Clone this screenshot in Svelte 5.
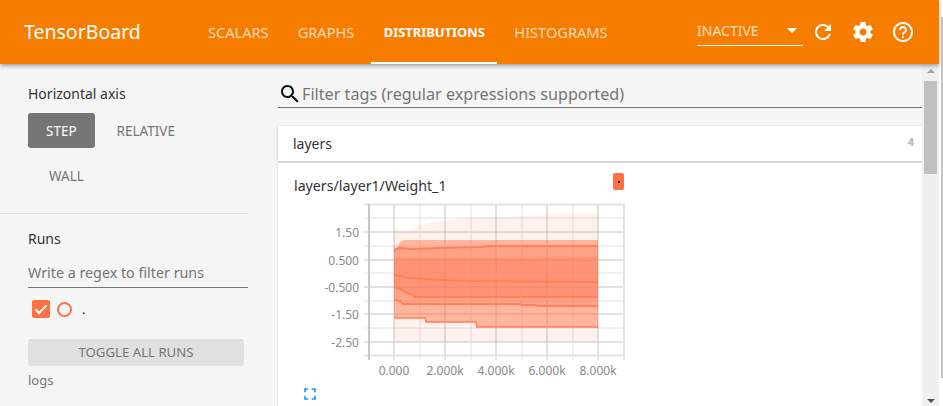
<script>
  // TensorBoard distributions dashboard, static snapshot.
  const tabs = ['Scalars', 'Graphs', 'Distributions', 'Histograms'];
  const activeTab = 'Distributions';
  const axisModes = ['Step', 'Relative', 'Wall'];

  const line = (pts) => pts.map((p) => p.join(',')).join(' ');
  const band = (top, bottom) => line([...top, ...[...bottom].reverse()]);

  const outerTop = [[394, 228], [402, 230], [410, 231], [420, 225], [440, 221], [470, 218], [520, 216], [598, 213]];
  const outerBottom = [[394, 342], [598, 342]];
  const t2 = [[394, 243], [395.5, 249], [400, 242], [404, 240], [598, 240]];
  const b2 = [[394, 318], [425, 318], [426, 322], [476, 322], [477, 327], [598, 327]];
  const t3 = [[394, 251], [396, 249], [400, 248], [410, 249], [440, 248], [480, 247], [490, 246], [598, 246]];
  const b3 = [[394, 300], [400, 301], [403, 304], [520, 304], [521, 305], [536, 305], [537, 306], [598, 306]];
  const t4 = [[394, 258], [598, 257]];
  const b4 = [[394, 287], [400, 289], [405, 292], [413, 295], [414, 297], [598, 297]];
  const median = [[394, 275], [400, 276], [410, 278], [440, 280], [470, 281], [598, 282]];

  const xMajor = [394, 445, 496, 547, 598];
  const xMinor = [420, 471, 522, 573];
  const yMajor = [232, 260, 287, 314, 342];
  const yMinor = [218, 246, 273, 301, 328];
  const yLabels = [[232, '1.50'], [260, '0.500'], [287, '-0.500'], [314, '-1.50'], [342, '-2.50']];
  const xLabels = [[394, '0.000'], [445, '2.000k'], [496, '4.000k'], [547, '6.000k'], [598, '8.000k']];
</script>

<div class="screen">
  <div class="page">
    <header class="topbar">
      <div class="brand">TensorBoard</div>
      <nav class="tabs">
        {#each tabs as tab}
          <div class="tab" class:active={tab === activeTab}>{tab}</div>
        {/each}
      </nav>
      <div class="actions">
        <div class="inactive">
          <span>INACTIVE</span>
          <i class="caret"></i>
        </div>
        <svg class="action" viewBox="0 0 24 24"><path d="M17.65 6.35C16.2 4.9 14.21 4 12 4c-4.42 0-7.99 3.58-7.99 8s3.57 8 7.99 8c3.73 0 6.84-2.55 7.73-6h-2.08c-.82 2.33-3.04 4-5.65 4-3.31 0-6-2.69-6-6s2.69-6 6-6c1.66 0 3.14.69 4.22 1.78L13 11h7V4l-2.35 2.35z" /></svg>
        <svg class="action" viewBox="0 0 24 24"><path d="M19.43 12.98c.04-.32.07-.64.07-.98s-.03-.66-.07-.98l2.11-1.65c.19-.15.24-.42.12-.64l-2-3.46c-.12-.22-.39-.3-.61-.22l-2.49 1c-.52-.4-1.08-.73-1.69-.98l-.38-2.65C14.46 2.18 14.25 2 14 2h-4c-.25 0-.46.18-.49.42l-.38 2.65c-.61.25-1.17.59-1.69.98l-2.49-1c-.23-.09-.49 0-.61.22l-2 3.46c-.13.22-.07.49.12.64l2.11 1.65c-.04.32-.07.65-.07.98s.03.66.07.98l-2.11 1.65c-.19.15-.24.42-.12.64l2 3.46c.12.22.39.3.61.22l2.49-1c.52.4 1.08.73 1.69.98l.38 2.65c.03.24.24.42.49.42h4c.25 0 .46-.18.49-.42l.38-2.65c.61-.25 1.17-.59 1.69-.98l2.49 1c.23.09.49 0 .61-.22l2-3.46c.12-.22.07-.49-.12-.64l-2.11-1.65zM12 15.5c-1.93 0-3.5-1.57-3.5-3.5s1.57-3.5 3.5-3.5 3.5 1.57 3.5 3.5-1.57 3.5-3.5 3.5z" /></svg>
        <svg class="action" viewBox="0 0 24 24"><path d="M11 18h2v-2h-2v2zm1-16C6.48 2 2 6.48 2 12s4.48 10 10 10 10-4.48 10-10S17.52 2 12 2zm0 18c-4.41 0-8-3.59-8-8s3.59-8 8-8 8 3.59 8 8-3.59 8-8 8zm0-14c-2.21 0-4 1.79-4 4h2c0-1.1.9-2 2-2s2 .9 2 2c0 2-3 1.75-3 5h2c0-2.25 3-2.5 3-5 0-2.21-1.79-4-4-4z" /></svg>
      </div>
    </header>

    <div class="body">
      <aside class="sidebar">
        <section class="axis">
          <h3>Horizontal axis</h3>
          <div class="modes">
            {#each axisModes as mode, i}
              <div class="mode" class:selected={i === 0}>{mode}</div>
            {/each}
          </div>
        </section>
        <section class="runs">
          <h3>Runs</h3>
          <div class="regex">Write a regex to filter runs</div>
          <div class="run">
            <span class="check">
              <svg viewBox="0 0 18 18"><path d="M3.5 9.5l3.6 3.5 7.4-7.6" /></svg>
            </span>
            <span class="radio"></span>
            <span class="run-name">.</span>
          </div>
          <div class="toggle">Toggle all runs</div>
          <div class="logdir">logs</div>
        </section>
      </aside>

      <main class="main">
        <div class="content">
          <div class="filter">
            <svg viewBox="0 0 24 24"><path d="M15.5 14h-.79l-.28-.27C15.41 12.59 16 11.11 16 9.5 16 5.91 13.09 3 9.5 3S3 5.91 3 9.5 5.91 16 9.5 16c1.61 0 3.09-.59 4.23-1.57l.27.28v.79l5 4.99L20.49 19l-4.99-5zm-6 0C7.01 14 5 11.99 5 9.5S7.01 5 9.5 5 14 7.01 14 9.5 11.99 14 9.5 14z" /></svg>
            <span>Filter tags (regular expressions supported)</span>
          </div>
          <div class="category">
            <span>layers</span>
            <span class="count">4</span>
          </div>
          <div class="card">
            <div class="tile">
              <div class="tile-head">
                <span>layers/layer1/Weight_1</span>
                <span class="chip"><i></i></span>
              </div>
              <svg class="chart" viewBox="325 195 315 190">
                {#each yMinor as y}<line class="minor" x1="364" x2="624" y1={y} y2={y} />{/each}
                {#each yMajor as y}<line class="major" x1="364" x2="624" y1={y} y2={y} />{/each}
                {#each xMinor as x}<line class="minor" x1={x} x2={x} y1="204" y2="360" />{/each}
                {#each xMajor as x}<line class="major" x1={x} x2={x} y1="204" y2="360" />{/each}
                <line class="frame" x1="364" x2="625" y1="204.5" y2="204.5" />
                <line class="frame" x1="364" x2="625" y1="355.5" y2="355.5" />
                <line class="frame" x1="624" x2="624" y1="204" y2="360" />
                <line class="y-axis" x1="369" x2="369" y1="204" y2="360" />

                <polygon class="band b1" points={band(outerTop, outerBottom)} />
                <polygon class="band b2" points={band(t2, b2)} />
                <polygon class="band b3" points={band(t3, b3)} />
                <polygon class="band b4" points={band(t4, b4)} />
                <polyline class="edge" points={line(t3)} />
                <polyline class="edge" points={line(median)} />
                <polyline class="edge" points={line(b4)} />
                <polyline class="edge" points={line(b3)} />
                <polyline class="edge thin" points={line(b2)} />

                {#each yLabels as [y, label]}
                  <text class="tick" x="359" y={y + 4.5} text-anchor="end">{label}</text>
                {/each}
                {#each xLabels as [x, label]}
                  <text class="tick" x={x} y="375" text-anchor="middle">{label}</text>
                {/each}
              </svg>
              <svg class="expand" viewBox="0 0 24 24"><path d="M7 14H5v5h5v-2H7v-3zm-2-4h2V7h3V5H5v5zm12 7h-3v2h5v-5h-2v3zM14 5v2h3v3h2V5h-5z" /></svg>
            </div>
          </div>
        </div>
        <div class="scrollbar">
          <i class="arrow up"></i>
          <div class="thumb"></div>
          <i class="arrow down"></i>
        </div>
      </main>
    </div>
  </div>
  <div class="outer-scroll"></div>
</div>

<style>
  :global(body) {
    margin: 0;
    background: #fff;
  }

  .screen {
    position: relative;
    width: 943px;
    height: 406px;
    overflow: hidden;
    font-family: "Noto Sans", "Open Sans", sans-serif;
  }

  .page {
    width: 939px;
    height: 406px;
    display: flex;
    flex-direction: column;
  }

  .outer-scroll {
    position: absolute;
    right: 0;
    top: 17px;
    width: 2px;
    height: 361px;
    background: #c4c4c4;
  }

  .topbar {
    flex: none;
    position: relative;
    z-index: 2;
    height: 64px;
    display: flex;
    align-items: stretch;
    background: #f77d00;
    color: #fff;
    box-shadow: 0 2px 4px rgba(0, 0, 0, 0.35);
  }

  .brand {
    width: 169.5px;
    padding-left: 24px;
    font-size: 19.5px;
    line-height: 64px;
  }

  .tabs {
    display: flex;
  }

  .tab {
    padding: 0 14.5px;
    font-size: 14.6px;
    line-height: 64px;
    text-transform: uppercase;
    color: rgba(255, 255, 255, 0.72);
  }

  .tab.active {
    margin: 0 2.5px;
    padding: 0 12.5px;
    font-size: 12.9px;
    font-weight: 700;
    color: #fff;
    box-shadow: inset 0 -2px 0 #fff;
  }

  .actions {
    margin-left: auto;
    padding-right: 24px;
    display: flex;
    align-items: center;
    gap: 16px;
  }

  .inactive {
    width: 106px;
    height: 27px;
    margin: 0 -8px 0 0;
    display: flex;
    justify-content: space-between;
    align-items: center;
    box-sizing: border-box;
    padding: 0 6px 2px 0;
    border-bottom: 1px solid #fff;
    font-size: 14px;
    color: rgba(255, 255, 255, 0.75);
  }

  .caret {
    width: 0;
    height: 0;
    border: 5px solid transparent;
    border-top-color: #fff;
    border-bottom: 0;
  }

  .action {
    width: 24px;
    height: 24px;
    fill: #fff;
  }

  .body {
    flex: 1;
    min-height: 0;
    display: flex;
    background: #f5f5f5;
  }

  .sidebar {
    flex: none;
    width: 248px;
    color: #333;
  }

  .sidebar h3 {
    margin: 0;
    font-size: 14px;
    font-weight: 400;
    line-height: 20px;
  }

  .axis {
    height: 150px;
    box-sizing: border-box;
    padding: 20px 0 0 28px;
    border-bottom: 1px solid #ddd;
  }

  .modes {
    margin-top: 9px;
    display: flex;
    flex-wrap: wrap;
    width: 200px;
  }

  .mode {
    height: 35px;
    padding: 1px 21px 0;
    box-sizing: border-box;
    margin-bottom: 10px;
    font-size: 13.5px;
    line-height: 35px;
    text-transform: uppercase;
    color: #757575;
    border-radius: 3px;
  }

  .mode.selected {
    padding: 1px 18px 0;
    margin-right: 1px;
    background: #757575;
    color: #fff;
  }

  .runs {
    padding: 15px 0 0 28px;
  }

  .regex {
    margin-top: 14px;
    height: 25px;
    box-sizing: border-box;
    border-bottom: 1px solid #757575;
    font-size: 14.3px;
    line-height: 20px;
    color: #757575;
  }

  .run {
    margin: 12px 0 0 4px;
    display: flex;
    align-items: center;
    height: 18px;
  }

  .check {
    width: 18px;
    height: 18px;
    border-radius: 2px;
    background: #ff7043;
  }

  .check svg {
    display: block;
    fill: none;
    stroke: #fff;
    stroke-width: 2;
  }

  .radio {
    width: 15px;
    height: 15px;
    box-sizing: border-box;
    margin-left: 7px;
    border: 2px solid #ff7043;
    border-radius: 50%;
  }

  .run-name {
    margin-left: 10px;
    font-size: 13px;
    color: #111;
  }

  .toggle {
    width: 216px;
    height: 27px;
    margin-top: 21px;
    background: #e0e0e0;
    border-radius: 3px;
    font-size: 13.2px;
    line-height: 27px;
    text-align: center;
    text-transform: uppercase;
    color: #757575;
  }

  .logdir {
    margin-top: 5px;
    font-size: 13px;
    line-height: 18px;
    color: #757575;
  }

  .main {
    flex: 1;
    min-width: 0;
    display: flex;
  }

  .content {
    flex: 1;
    min-width: 0;
    padding-left: 30px;
  }

  .filter {
    height: 44px;
    box-sizing: border-box;
    padding-top: 18px;
    display: flex;
    align-items: flex-start;
    border-bottom: 1px solid #757575;
    font-size: 16.2px;
    line-height: 24px;
    color: #757575;
  }

  .filter svg {
    width: 24px;
    height: 24px;
    fill: #111;
  }

  .category {
    margin-top: 18px;
    height: 35px;
    padding: 0 8px 0 15px;
    display: flex;
    align-items: center;
    justify-content: space-between;
    background: #fff;
    box-shadow: 0 1px 3px rgba(0, 0, 0, 0.2);
    font-size: 14px;
    color: #333;
  }

  .count {
    margin-top: -4px;
    font-size: 11px;
    font-weight: 700;
    color: #b5b5b5;
  }

  .card {
    margin-top: 2px;
    height: 245px;
    background: #fff;
    box-shadow: 0 0 2px rgba(0, 0, 0, 0.15);
  }

  .tile {
    width: 346px;
    margin-left: 16px;
  }

  .tile-head {
    width: 330px;
    height: 32px;
    display: flex;
    justify-content: space-between;
    font-size: 14.2px;
    line-height: 20px;
    padding-top: 13px;
    box-sizing: border-box;
    color: #333;
  }

  .chip {
    display: flex;
    align-items: center;
    justify-content: center;
    width: 11px;
    height: 17px;
    margin-top: -3px;
    border-radius: 2px;
    background: #ff7043;
  }

  .chip i {
    width: 2px;
    height: 2px;
    background: #222;
  }

  .chart {
    display: block;
    width: 315px;
    height: 190px;
    margin-left: 31px;
  }

  .minor {
    stroke: #e2e2e2;
    stroke-width: 1;
  }

  .major {
    stroke: #c4c4c4;
    stroke-width: 1;
  }

  .frame {
    stroke: #e2e2e2;
    stroke-width: 2;
  }

  .y-axis {
    stroke: #c8c8c8;
    stroke-width: 2;
  }

  .band {
    fill: #ff7043;
    stroke: none;
  }

  .b1 {
    fill-opacity: 0.09;
  }

  .b2 {
    fill-opacity: 0.47;
  }

  .b3 {
    fill-opacity: 0.25;
  }

  .b4 {
    fill-opacity: 0.28;
  }

  .edge {
    fill: none;
    stroke: #ff8059;
    stroke-width: 2;
  }

  .edge.thin {
    stroke-width: 1.6;
  }

  .tick {
    font-size: 12px;
    fill: #8a8a8a;
  }

  .expand {
    display: block;
    width: 20px;
    height: 20px;
    margin: -1px 0 0 6px;
    fill: #2196f3;
  }

  .scrollbar {
    flex: none;
    position: relative;
    width: 17px;
    background: #f0f0f0;
  }

  .thumb {
    position: absolute;
    top: 17px;
    left: 2px;
    width: 13px;
    height: 93px;
    background: #c0c0c0;
  }

  .arrow {
    position: absolute;
    left: 5px;
    width: 0;
    height: 0;
    border: 4px solid transparent;
  }

  .arrow.up {
    top: 5px;
    border-top: 0;
    border-bottom-color: #a0a0a0;
  }

  .arrow.down {
    bottom: 3px;
    border-bottom: 0;
    border-top-color: #505050;
  }
</style>
